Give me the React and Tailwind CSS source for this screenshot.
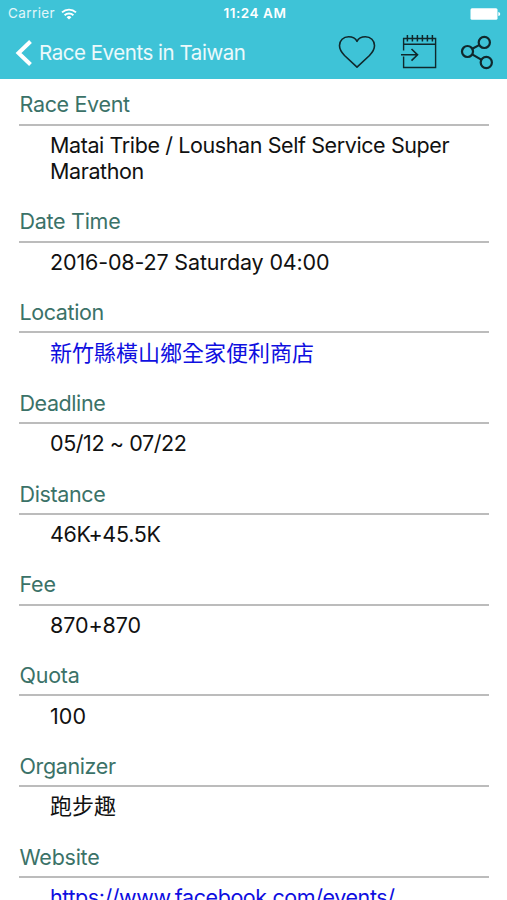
import clsx from "clsx";

const FIELDS = [
  { label: "Race Event", value: "Matai Tribe / Loushan Self Service Super Marathon", labelClass: "tracking-[-0.33px]", valueClass: "text-[21.5px] tracking-[-0.4px]" },
  { label: "Date Time", value: "2016-08-27 Saturday 04:00", labelClass: "tracking-[-0.28px]", valueClass: "text-[21.5px] tracking-[-0.15px]" },
  { label: "Location", value: "新竹縣橫山鄉全家便利商店", link: true, labelClass: "tracking-[-0.4px]" },
  { label: "Deadline", value: "05/12 ~ 07/22", labelClass: "tracking-[-0.42px]", valueClass: "text-[21.5px] tracking-[-0.42px]" },
  { label: "Distance", value: "46K+45.5K", labelClass: "tracking-[-0.36px]", valueClass: "text-[21.5px] tracking-[-0.3px]" },
  { label: "Fee", value: "870+870", labelClass: "tracking-[-0.25px]", valueClass: "text-[21.5px] tracking-[-0.1px]" },
  { label: "Quota", value: "100", labelClass: "tracking-[-0.25px]", valueClass: "text-[21.5px] tracking-[0.1px]" },
  { label: "Organizer", value: "跑步趣", labelClass: "tracking-[-0.38px]" },
  { label: "Website", value: "https://www.facebook.com/events/", link: true, labelClass: "tracking-[-0.25px]", valueClass: "text-[21.5px] tracking-[-0.42px]" },
];

function WifiIcon() {
  return (
    <svg width="16" height="12" viewBox="0 0 16 12" fill="none" stroke="currentColor" strokeWidth="1.9">
      <path d="M1 4.4a10.2 10.2 0 0 1 14 0" />
      <path d="M3.6 7.2a6.4 6.4 0 0 1 8.8 0" />
      <path d="M8 11.6 5.6 9.2a3.4 3.4 0 0 1 4.8 0z" fill="currentColor" stroke="none" />
    </svg>
  );
}

function BatteryIcon() {
  return (
    <svg width="31" height="12" viewBox="0 0 31 12" fill="currentColor">
      <rect x="0.5" y="0.3" width="27" height="11.4" rx="1.5" />
      <path d="M28.3 3.9c1.2.2 1.9 1 1.9 2.1s-.7 1.9-1.9 2.1z" />
    </svg>
  );
}

function HeartIcon() {
  return (
    <svg width="38" height="34" viewBox="0 0 38 34" fill="none" stroke="currentColor" strokeWidth="1.6" strokeLinejoin="round">
      <path d="M19 6.3C17.6 3.4 14.2 1.7 10.6 1.7 5.4 1.7 1.5 5.5 1.5 10.6c0 4 2 6.9 5 9.9L19 32.2 31.5 20.5c3-3 5-5.9 5-9.9 0-5.1-3.9-8.9-9.1-8.9-3.6 0-7 1.7-8.4 4.6z" />
    </svg>
  );
}

function CalendarIcon() {
  return (
    <svg width="38" height="36" viewBox="0 0 38 36" fill="none" stroke="currentColor" strokeWidth="1.4">
      <path d="M3.6 16.5V4.5h32v29h-32V22.5" />
      <path d="M3.6 10.3h32" />
      <path d="M7.4 1v6.5M12.4 1v6.5M17.4 1v6.5M22.4 1v6.5M27.4 1v6.5M32.4 1v6.5" strokeWidth="1.5" />
      <path d="M1 20.8h16.5M11.5 15l6 5.8-6 5.8" strokeWidth="1.6" />
    </svg>
  );
}

function ShareIcon() {
  return (
    <svg width="34" height="36" viewBox="0 0 34 36" fill="none" stroke="currentColor" strokeWidth="2.2">
      <circle cx="7.5" cy="17.5" r="5.5" />
      <circle cx="24.3" cy="8.4" r="5.6" />
      <circle cx="26.3" cy="28.5" r="5.6" />
      <path d="M12.3 14.8l6.8-3.7M12.2 20.4l9 5.2" />
    </svg>
  );
}

function StatusBar() {
  return (
    <div className="grid h-[27px] grid-cols-3 items-center pr-[6px] pl-[8px] text-[13px] leading-[27px]">
      <div className="flex items-center gap-[5.5px]">
        <span className="text-[13.5px] tracking-[0.4px] text-white/85">Carrier</span>
        <WifiIcon />
      </div>
      <span className="pl-[1px] text-center text-[13.5px] font-semibold tracking-[0.55px]">11:24 AM</span>
      <div className="flex justify-end">
        <BatteryIcon />
      </div>
    </div>
  );
}

function NavBar() {
  return (
    <nav className="flex h-[52px] items-center pr-[13px] pl-[15px]">
      <button className="flex items-center gap-[6px]">
        <svg width="18" height="26" viewBox="0 0 18 26" fill="none" stroke="currentColor" strokeWidth="4">
          <path d="M15.5 1.5 3.5 13l12 11.5" />
        </svg>
        <span className="text-[20.5px] tracking-[-0.46px] whitespace-nowrap text-white/90">Race Events in Taiwan</span>
      </button>
      <div className="ml-auto flex items-center pb-[3px] text-[#10282c]">
        <HeartIcon />
        <span className="w-[24px]" />
        <CalendarIcon />
        <span className="w-[22px]" />
        <ShareIcon />
      </div>
    </nav>
  );
}

function Field({ label, value, link, labelClass, valueClass }) {
  return (
    <section className="pb-[24.1px] leading-[26.1px]">
      <h2 className={clsx("pb-[6.3px] pl-[0.5px] text-[21.5px] text-[#3b7268]", labelClass)}>{label}</h2>
      <div className="h-[2px] bg-[#bcbcbc]" />
      <p className={clsx("pt-[6.2px] pl-[31px]", link ? "text-[#0f0fe0]" : "text-[#111]", valueClass || "text-[22px]")}>{value}</p>
    </section>
  );
}

export default function App() {
  return (
    <div className="h-[900px] w-[507px] overflow-hidden bg-white font-['Inter','Noto_Sans_CJK_TC',sans-serif]">
      <header className="h-[79px] bg-[#3ec3d7] text-white">
        <StatusBar />
        <NavBar />
      </header>
      <main className="pt-[12.4px] pr-[18px] pl-[19px]">
        {FIELDS.map((f) => (
          <Field key={f.label} {...f} />
        ))}
      </main>
    </div>
  );
}
